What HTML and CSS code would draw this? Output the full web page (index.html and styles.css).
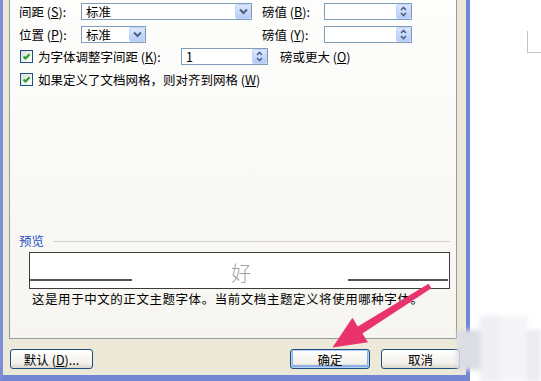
FILE: index.html
```html
<!DOCTYPE html>
<html lang="zh-CN">
<head>
<meta charset="utf-8">
<title>字体 - 字符间距</title>
<link rel="stylesheet" href="styles.css">
</head>
<body>
<div class="screen">
  <div class="dialog">
    <div class="panel">
      <div class="grid2">
        <span class="lbl">间距 (<u>S</u>):</span>
        <div class="combo long"><span class="val">标准</span><span class="dd"><svg width="9" height="7" viewBox="0 0 9 7"><polyline points="1,1.5 4.5,5 8,1.5" fill="none" stroke="#4d6185" stroke-width="2"/></svg></span></div>
        <span class="lbl">磅值 (<u>B</u>):</span>
        <div class="spin"><span class="val"></span><span class="sb"><svg width="9" height="11" viewBox="0 0 9 11"><polyline points="2,4 4.5,1.5 7,4" fill="none" stroke="#4d6185" stroke-width="1.6"/><polyline points="2,7 4.5,9.5 7,7" fill="none" stroke="#4d6185" stroke-width="1.6"/></svg></span></div>

        <span class="lbl">位置 (<u>P</u>):</span>
        <div class="combo short"><span class="val">标准</span><span class="dd"><svg width="9" height="7" viewBox="0 0 9 7"><polyline points="1,1.5 4.5,5 8,1.5" fill="none" stroke="#4d6185" stroke-width="2"/></svg></span></div>
        <span class="lbl">磅值 (<u>Y</u>):</span>
        <div class="spin"><span class="val"></span><span class="sb"><svg width="9" height="11" viewBox="0 0 9 11"><polyline points="2,4 4.5,1.5 7,4" fill="none" stroke="#4d6185" stroke-width="1.6"/><polyline points="2,7 4.5,9.5 7,7" fill="none" stroke="#4d6185" stroke-width="1.6"/></svg></span></div>
      </div>

      <div class="row r3">
        <span class="cb"><svg width="11" height="11" viewBox="0 0 11 11"><polyline points="2.5,5.5 4.5,7.5 8.5,3.2" fill="none" stroke="#21a121" stroke-width="2"/></svg></span>
        <span class="cbtext kern">为字体调整字间距 (<u>K</u>):</span>
        <div class="spin small"><span class="val">1</span><span class="sb"><svg width="9" height="11" viewBox="0 0 9 11"><polyline points="2,4 4.5,1.5 7,4" fill="none" stroke="#4d6185" stroke-width="1.6"/><polyline points="2,7 4.5,9.5 7,7" fill="none" stroke="#4d6185" stroke-width="1.6"/></svg></span></div>
        <span class="after">磅或更大 (<u>O</u>)</span>
      </div>

      <div class="row r4">
        <span class="cb"><svg width="11" height="11" viewBox="0 0 11 11"><polyline points="2.5,5.5 4.5,7.5 8.5,3.2" fill="none" stroke="#21a121" stroke-width="2"/></svg></span>
        <span class="cbtext">如果定义了文档网格，则对齐到网格 (<u>W</u>)</span>
      </div>

      <div class="group-head">
        <span class="group-title">预览</span>
        <span class="group-line"></span>
      </div>
      <div class="preview">
        <span class="pline left"></span>
        <span class="pchar">好</span>
        <span class="pline right"></span>
      </div>
      <p class="desc">这是用于中文的正文主题字体。当前文档主题定义将使用哪种字体。</p>
    </div>

    <div class="footer">
      <button class="btn def-btn">默认 (<u>D</u>)...</button>
      <button class="btn ok">确定</button>
      <button class="btn cancel">取消</button>
    </div>
  </div>

  <div class="page-area">
    <span class="corner"></span>
  </div>

  <div class="blur">
    <span class="b1"></span><span class="b2"></span><span class="b3"></span><span class="b4"></span>
  </div>

  <svg class="arrow" width="541" height="381" viewBox="0 0 541 381">
    <polygon points="428.6,283.8 431.4,288.2 362.4,333.6 368,342.2 332.5,347.5 352.4,317.8 357.8,326.4" fill="#e9336f"/>
  </svg>
</div>
</body>
</html>
```

FILE: styles.css
```css
* { box-sizing: border-box; }
html, body { margin: 0; padding: 0; }
body {
  width: 541px;
  height: 381px;
  overflow: hidden;
  background: #ffffff;
  font-family: "Noto Sans CJK SC", "Liberation Sans", sans-serif;
  font-size: 12.5px;
  color: #000;
}
u { text-underline-offset: 1px; }

.screen {
  position: relative;
  display: flex;
  width: 541px;
  height: 381px;
}

.dialog {
  width: 470px;
  height: 381px;
  flex: none;
  background: #ece9d8;
  border-left: 3px solid #7d8fd8;
  border-right: 4px solid #7386d4;
  border-bottom: 6px solid #7386d4;
  display: flex;
  flex-direction: column;
}

.panel {
  height: 339px;
  margin: 0 9px 0 6px;
  border: 1px solid #919b9c;
  border-top: none;
  background: linear-gradient(#fdfdfc, #f6f5f0);
  display: flex;
  flex-direction: column;
}

.grid2 {
  display: grid;
  grid-template-columns: 62px 181px 62px 88px;
  grid-auto-rows: 17px;
  row-gap: 6px;
  padding-left: 9px;
  margin-top: 3px;
  align-items: center;
}

.lbl { white-space: nowrap; line-height: 17px; }

.combo, .spin {
  height: 17px;
  border: 1px solid #7f9db9;
  background: #fff;
  display: flex;
  align-items: center;
  justify-content: space-between;
}
.combo.long { width: 171px; }
.combo.short { width: 65px; }
.spin { width: 88px; }
.spin.small { width: 87px; }

.val { padding-left: 4px; line-height: 15px; }

.dd, .sb {
  width: 16px;
  height: 15px;
  border: 1px solid #c2d4f7;
  border-radius: 2px;
  background: linear-gradient(#dde8fe, #b6cbf8);
  display: flex;
  align-items: center;
  justify-content: center;
  margin-right: 0;
}
.sb { width: 15px; }

.row {
  display: flex;
  align-items: center;
  height: 17px;
  padding-left: 10px;
}
.r3 { margin-top: 5px; }
.r4 { margin-top: 6px; }

.cb {
  width: 13px;
  height: 13px;
  border: 1px solid #1c5180;
  background: linear-gradient(135deg, #dcdcd7, #ffffff);
  display: flex;
  align-items: center;
  justify-content: center;
  flex: none;
}
.cbtext { margin-left: 5px; white-space: nowrap; }
.cbtext.kern { width: 143px; }
.after { margin-left: 12px; white-space: nowrap; }

.group-head {
  display: flex;
  align-items: center;
  height: 16px;
  margin-top: 145px;
  padding-left: 9px;
  padding-right: 6px;
}
.group-title { color: #1f4fc4; line-height: 16px; }
.group-line {
  flex: 1;
  height: 1px;
  background: #d6d3c4;
  margin-left: 9px;
}

.preview {
  height: 37px;
  margin: 3px 6px 0 19px;
  border: 1px solid #3c3c3c;
  background: #fff;
  display: flex;
  align-items: flex-end;
  justify-content: space-between;
}
.pline {
  height: 2px;
  background: #555;
  margin-bottom: 7px;
}
.pline.left { width: 102px; }
.pline.right { width: 100px; margin-right: 1px; }
.pchar {
  font-size: 20px;
  line-height: 22px;
  color: #a0a0a0;
  font-weight: 300;
  margin-bottom: 4px;
  margin-left: 2px;
}

.desc {
  margin: 2px 0 0 22px;
  line-height: 15px;
  letter-spacing: 0.55px;
  white-space: nowrap;
}

.footer {
  height: 36px;
  display: flex;
  align-items: flex-start;
  padding: 10px 7px 0 7px;
}
.btn {
  height: 20px;
  border: 1px solid #1e4d7e;
  border-radius: 3px;
  background: linear-gradient(#ffffff, #f3f2ec 70%, #dcd8cc);
  font-family: inherit;
  font-size: 12.5px;
  padding: 0;
  line-height: 17px;
  color: #000;
}
.def-btn { width: 83px; }
.ok {
  width: 80px;
  margin-left: auto;
  box-shadow: inset 0 0 0 1px #b9d0f5, inset 0 -1px 0 2px #8eb0ea;
}
.cancel { width: 79px; margin-left: 11px; margin-right: -1px; }

.page-area {
  flex: 1;
  padding-top: 31px;
}
.corner {
  display: block;
  width: 14px;
  height: 22px;
  margin-left: 57px;
  border-left: 1px solid #c4c4c4;
  border-bottom: 1px solid #c4c4c4;
}

.blur {
  position: absolute;
  left: 455px;
  top: 312px;
  width: 86px;
  height: 69px;
  filter: blur(2px);
}
.blur span { position: absolute; display: block; }
.b1 { left: 2px; top: 18px; width: 25px; height: 40px; background: #dcdce5; }
.b2 { left: 25px; top: 4px; width: 20px; height: 65px; background: #eeeef3; }
.b3 { left: 45px; top: 4px; width: 28px; height: 65px; background: #f5f5f8; }
.b4 { left: 72px; top: 18px; width: 14px; height: 51px; background: #ebebf0; }

.arrow {
  position: absolute;
  left: 0;
  top: 0;
  pointer-events: none;
}
```
